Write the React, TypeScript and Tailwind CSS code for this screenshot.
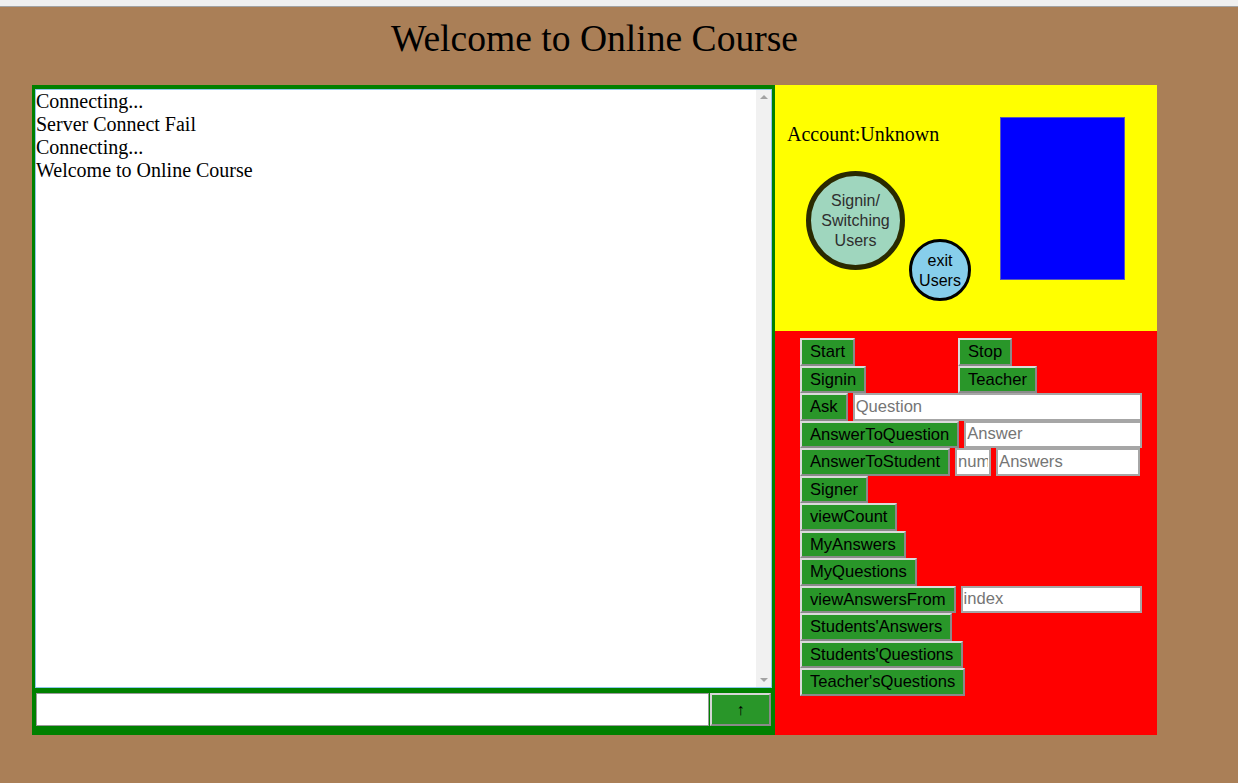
import React from "react";

const sans = { fontFamily: '"Liberation Sans", Arial, sans-serif' };
const serif = { fontFamily: '"Liberation Serif", "Times New Roman", serif' };

function Btn({ label }: { label: string }) {
  return (
    <button
      className="h-full px-[8px] border-2 border-t-[#dadada] border-l-[#dadada] border-r-[#8a8a8a] border-b-[#8a8a8a] bg-[#299629] text-[16.6px] leading-[19px] text-black whitespace-nowrap"
      style={sans}
    >
      {label}
    </button>
  );
}

function Field({ ph, w }: { ph: string; w: string }) {
  return (
    <input
      placeholder={ph}
      className={`h-full ${w} border-2 border-[#a6a6a6] bg-white px-px text-[16.6px] text-black placeholder:text-[#757575] outline-none`}
      style={sans}
    />
  );
}

export default function App() {
  const [msg, setMsg] = React.useState("");
  const log = ["Connecting...", "Server Connect Fail", "Connecting...", "Welcome to Online Course"];

  return (
    <main className="w-[1238px] h-[783px] bg-[#aa7f57] overflow-hidden">
      <div className="h-[7px] bg-[#f0f0f0] border-b border-[#a3a3a3]" />

      <div className="w-[1125px] ml-[32px]">
        <h1 className="pt-[11px] text-center text-[37.6px] leading-[42px] text-black" style={serif}>
          Welcome to Online Course
        </h1>

        <div className="mt-[25px] flex">
          {/* chat side */}
          <div className="w-[743px] h-[650px] bg-[#008000] pt-[4px] px-[3px] flex flex-col">
            <div className="h-[599px] border border-[#8ec8ec] bg-white flex">
              <div className="flex-1 text-[20px] leading-[23px] text-black" style={serif}>
                {log.map((l, i) => (
                  <div key={i}>{l}</div>
                ))}
              </div>
              <div className="w-[15px] bg-[#f1f1f1] flex flex-col justify-between items-center pt-[5px] pb-[5px]">
                <div className="w-0 h-0 border-l-[4px] border-r-[4px] border-b-[4px] border-l-transparent border-r-transparent border-b-[#a3a3a3]" />
                <div className="w-0 h-0 border-l-[4px] border-r-[4px] border-t-[4px] border-l-transparent border-r-transparent border-t-[#a3a3a3]" />
              </div>
            </div>
            <div className="mt-[5px] flex h-[33px]">
              <input
                value={msg}
                onChange={(e) => setMsg(e.target.value)}
                className="ml-px w-[673px] h-full border border-[#9a9a9a] bg-white outline-none"
              />
              <button
                className="ml-px w-[61px] h-full border-2 border-t-[#d6d6d6] border-l-[#d6d6d6] border-r-[#8a8a8a] border-b-[#8a8a8a] bg-[#299629] text-[16px] text-black"
                style={sans}
              >
                ↑
              </button>
            </div>
          </div>

          {/* account + controls */}
          <div className="w-[382px] h-[650px] flex flex-col">
            <div className="h-[246px] bg-[#ffff00] flex">
              <div className="w-[225px] pl-[12px] pt-[38px]">
                <div className="text-[20px] leading-[23px] text-black" style={serif}>
                  Account:Unknown
                </div>
                <div className="mt-[25px] ml-[19px] flex items-start">
                  <button
                    className="w-[99px] h-[99px] rounded-full border-[5px] border-[#2a2a00] bg-[#9fd6be] text-[16px] leading-[20px] text-[#2e2e2e] flex items-center justify-center"
                    style={sans}
                  >
                    Signin/
                    <br />
                    Switching
                    <br />
                    Users
                  </button>
                  <button
                    className="ml-[4px] mt-[68px] w-[62px] h-[62px] rounded-full border-[3px] border-black bg-[#87ceeb] text-[16px] leading-[20px] text-black flex items-center justify-center pt-[2px]"
                    style={sans}
                  >
                    exit
                    <br />
                    Users
                  </button>
                </div>
              </div>
              <div className="mt-[32px] w-[125px] h-[163px] bg-[#0000ff] border border-[#5a5ab4]" />
            </div>

            <div className="flex-1 bg-[#ff0000] pt-[7px] pl-[25px] flex flex-col">
              <div className="h-[27.5px] flex">
                <div className="w-[158px] h-full">
                  <Btn label="Start" />
                </div>
                <Btn label="Stop" />
              </div>
              <div className="h-[27.5px] flex">
                <div className="w-[158px] h-full">
                  <Btn label="Signin" />
                </div>
                <Btn label="Teacher" />
              </div>
              <div className="h-[27.5px] flex gap-[5px]">
                <Btn label="Ask" />
                <Field ph="Question" w="w-[289px]" />
              </div>
              <div className="h-[27.5px] flex gap-[5px]">
                <Btn label="AnswerToQuestion" />
                <Field ph="Answer" w="w-[178px]" />
              </div>
              <div className="h-[27.5px] flex gap-[5px]">
                <Btn label="AnswerToStudent" />
                <Field ph="num" w="w-[36px]" />
                <Field ph="Answers" w="w-[144px]" />
              </div>
              <div className="h-[27.5px] flex">
                <Btn label="Signer" />
              </div>
              <div className="h-[27.5px] flex">
                <Btn label="viewCount" />
              </div>
              <div className="h-[27.5px] flex">
                <Btn label="MyAnswers" />
              </div>
              <div className="h-[27.5px] flex">
                <Btn label="MyQuestions" />
              </div>
              <div className="h-[27.5px] flex gap-[5px]">
                <Btn label="viewAnswersFrom" />
                <Field ph="index" w="w-[181px]" />
              </div>
              <div className="h-[27.5px] flex">
                <Btn label="Students'Answers" />
              </div>
              <div className="h-[27.5px] flex">
                <Btn label="Students'Questions" />
              </div>
              <div className="h-[27.5px] flex">
                <Btn label="Teacher'sQuestions" />
              </div>
            </div>
          </div>
        </div>
      </div>
    </main>
  );
}
